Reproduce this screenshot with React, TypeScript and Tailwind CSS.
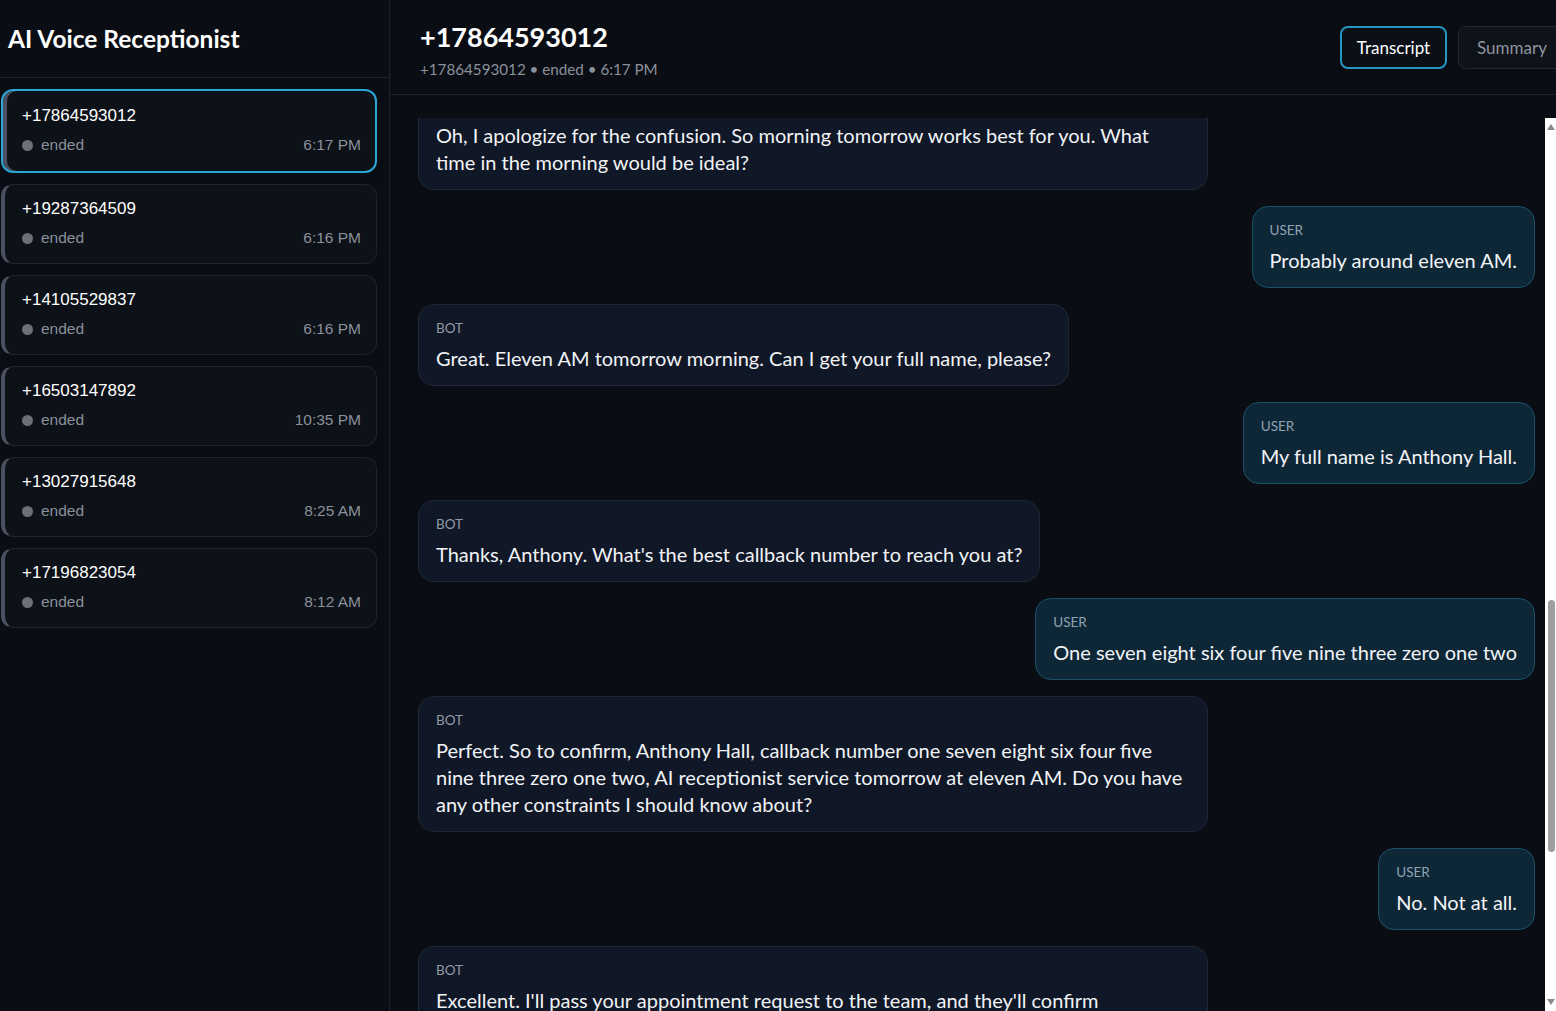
import { useEffect, useRef } from "react";

type Call = { phone: string; status: string; time: string };
type Msg = { role: "bot" | "user"; text: string; anchor?: boolean };

const calls: Call[] = [
  { phone: "+17864593012", status: "ended", time: "6:17 PM" },
  { phone: "+19287364509", status: "ended", time: "6:16 PM" },
  { phone: "+14105529837", status: "ended", time: "6:16 PM" },
  { phone: "+16503147892", status: "ended", time: "10:35 PM" },
  { phone: "+13027915648", status: "ended", time: "8:25 AM" },
  { phone: "+17196823054", status: "ended", time: "8:12 AM" },
];

const messages: Msg[] = [
  { role: "bot", text: "Hello, thank you for calling. This is the AI receptionist. How can I help you today?" },
  { role: "user", text: "Hi, I'd like to book an appointment." },
  { role: "bot", text: "Sure, I can help with that. What service are you interested in?" },
  { role: "user", text: "The AI receptionist service." },
  { role: "bot", text: "Great choice. Is this for a new setup or an existing account?" },
  { role: "user", text: "A new setup." },
  { role: "bot", text: "Perfect. What day works best for you?" },
  { role: "user", text: "Tomorrow." },
  { role: "bot", text: "Tomorrow works. Would you prefer morning or afternoon?" },
  { role: "user", text: "Morning, please." },
  { role: "bot", text: "Got it, tomorrow afternoon. Is there a specific time that works for you?" },
  { role: "user", text: "No, I said morning." },
  { role: "bot", text: "Oh, I apologize for the confusion. So morning tomorrow works best for you. What time in the morning would be ideal?", anchor: true },
  { role: "user", text: "Probably around eleven AM." },
  { role: "bot", text: "Great. Eleven AM tomorrow morning. Can I get your full name, please?" },
  { role: "user", text: "My full name is Anthony Hall." },
  { role: "bot", text: "Thanks, Anthony. What's the best callback number to reach you at?" },
  { role: "user", text: "One seven eight six four five nine three zero one two" },
  {
    role: "bot",
    text: "Perfect. So to confirm, Anthony Hall, callback number one seven eight six four five nine three zero one two, AI receptionist service tomorrow at eleven AM. Do you have any other constraints I should know about?",
  },
  { role: "user", text: "No. Not at all." },
  {
    role: "bot",
    text: "Excellent. I'll pass your appointment request to the team, and they'll confirm everything with you shortly. Is there anything else I can help you with?",
  },
  { role: "user", text: "No, that's it. Thanks." },
  { role: "bot", text: "You're welcome, Anthony. Have a great day. Goodbye." },
];

function CallCard({ call, active }: { call: Call; active: boolean }) {
  return (
    <div
      className={
        active
          ? "rounded-xl border-2 border-[#2ba6d6] bg-[#0d1118] shadow-[inset_4px_0_0_#4b5160] pl-[19px] pr-[14px] pt-[14px] pb-[15px]"
          : "rounded-xl border border-[#1d2330] border-l-4 border-l-[#4b5160] bg-[#0d1118] pl-[17px] pr-[15px] pt-[13px] pb-[14px]"
      }
    >
      <div className="text-[17px] leading-[22px] text-white">{call.phone}</div>
      <div className="mt-[7px] flex items-center justify-between text-[15.5px] leading-[22px] text-[#8b909a]">
        <div className="flex items-center gap-[8px]">
          <span className="h-[11px] w-[11px] rounded-full bg-[#6b7079]" />
          <span>{call.status}</span>
        </div>
        <span>{call.time}</span>
      </div>
    </div>
  );
}

function Bubble({ msg, innerRef }: { msg: Msg; innerRef?: React.Ref<HTMLDivElement> }) {
  const isUser = msg.role === "user";
  return (
    <div className={isUser ? "flex justify-end" : "flex justify-start"}>
      <div
        ref={innerRef}
        className={
          isUser
            ? "max-w-[790px] rounded-2xl border border-[#1b5067] bg-[#0e2737] px-[17px] pt-[14px] pb-[13px]"
            : "max-w-[790px] rounded-2xl border border-[#1f2838] bg-[#101726] px-[17px] pt-[14px] pb-[13px]"
        }
      >
        <div
          className={
            isUser
              ? "mb-[8px] text-[13.5px] leading-[18px] text-[#8fa3b3]"
              : "mb-[8px] text-[13.5px] leading-[18px] text-[#939aa6]"
          }
        >
          {isUser ? "USER" : "BOT"}
        </div>
        <div className="text-[20px] leading-[27px] text-[#f1f3f6]">{msg.text}</div>
      </div>
    </div>
  );
}

function FakeScrollbar() {
  return (
    <div className="relative w-[11px] shrink-0 bg-white">
      <svg className="absolute left-[2px] top-[6px]" width="8" height="6" viewBox="0 0 8 6">
        <path d="M4 0 L8 6 L0 6 Z" fill="#8a8a8a" />
      </svg>
      <div className="absolute left-[3px] top-[482px] h-[252px] w-[7px] rounded-full bg-[#9f9f9f]" />
      <svg className="absolute bottom-[6px] left-[2px]" width="8" height="6" viewBox="0 0 8 6">
        <path d="M0 0 L8 0 L4 6 Z" fill="#8a8a8a" />
      </svg>
    </div>
  );
}

export default function App() {
  const scrollRef = useRef<HTMLDivElement>(null);
  const anchorRef = useRef<HTMLDivElement>(null);

  useEffect(() => {
    const box = scrollRef.current;
    const el = anchorRef.current;
    if (box && el) {
      box.scrollTop = el.offsetTop + 37;
    }
  }, []);

  return (
    <div
      className="flex h-[1011px] w-full overflow-hidden bg-[#0a0d13] text-white"
      style={{ fontFamily: "Lato, 'Noto Sans', sans-serif" }}
    >
      {/* Sidebar */}
      <aside className="flex w-[390px] shrink-0 flex-col border-r border-[#1b202b] bg-[#0a0d13]">
        <div className="flex h-[78px] shrink-0 items-center border-b border-[#1d222d] px-[8px] pt-[2px]">
          <h1 className="text-[24.5px] font-bold text-white">AI Voice Receptionist</h1>
        </div>
        <div
          className="flex flex-col gap-[11px] pl-[1px] pr-[12px] pt-[11px]"
          style={{ fontFamily: "'Liberation Sans', Arial, sans-serif" }}
        >
          {calls.map((c, i) => (
            <CallCard key={c.phone} call={c} active={i === 0} />
          ))}
        </div>
      </aside>

      {/* Main */}
      <main className="flex min-w-0 flex-1 flex-col overflow-hidden">
        <header className="flex h-[95px] shrink-0 items-center justify-between border-b border-[#1b202b] pl-[30px]">
          <div className="pt-[5px]">
            <div className="text-[27px] font-bold leading-[34px] text-white">+17864593012</div>
            <div className="mt-[4px] text-[15.2px] leading-[22px] text-[#8b919b]">
              +17864593012 • ended • 6:17 PM
            </div>
          </div>
          <div className="-mr-[10px] flex items-center gap-[11px] pt-[1px]">
            <button className="h-[43px] w-[107px] rounded-lg border-2 border-[#2595c2] bg-[#0b1017] text-[17px] text-white">
              Transcript
            </button>
            <button className="h-[43px] w-[108px] rounded-lg border border-[#222835] bg-[#0e1219] text-[17px] text-[#8e949e]">
              Summary
            </button>
          </div>
        </header>

        <div className="mt-[23px] flex min-h-0 flex-1">
          <div ref={scrollRef} className="relative min-w-0 flex-1 overflow-hidden pl-[28px] pr-[10px] pb-6">
            <div className="flex flex-col gap-4 pt-4">
              {messages.map((m, i) => (
                <Bubble key={i} msg={m} innerRef={m.anchor ? anchorRef : undefined} />
              ))}
            </div>
          </div>
          <FakeScrollbar />
        </div>
      </main>
    </div>
  );
}
